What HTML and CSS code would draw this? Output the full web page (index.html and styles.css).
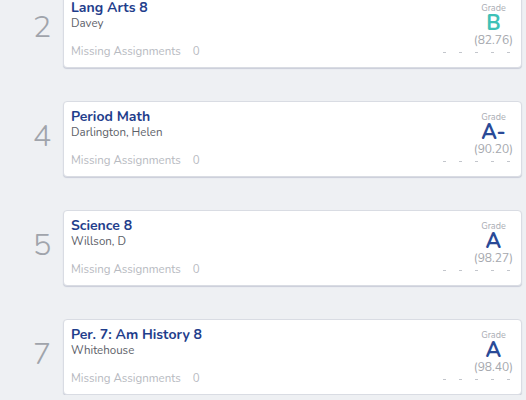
FILE: index.html
```html
<!DOCTYPE html>
<html>
<head>
<meta charset="utf-8">
<link rel="stylesheet" href="styles.css">
</head>
<body>
<div class="list">
  <div class="row">
    <div class="period">2</div>
    <div class="card">
      <div class="info">
        <div class="title">Lang Arts 8</div>
        <div class="teacher">Davey</div>
        <div class="missing">Missing Assignments <span class="count">0</span></div>
      </div>
      <div class="grade">
        <div class="grade-box">
          <div class="label">Grade</div>
          <div class="letter teal">B</div>
          <div class="score">(82.76)</div>
        </div>
        <div class="dashes"><span></span><span></span><span></span><span></span><span></span></div>
      </div>
    </div>
  </div>
  <div class="row">
    <div class="period">4</div>
    <div class="card">
      <div class="info">
        <div class="title">Period Math</div>
        <div class="teacher">Darlington, Helen</div>
        <div class="missing">Missing Assignments <span class="count">0</span></div>
      </div>
      <div class="grade">
        <div class="grade-box">
          <div class="label">Grade</div>
          <div class="letter">A-</div>
          <div class="score">(90.20)</div>
        </div>
        <div class="dashes"><span></span><span></span><span></span><span></span><span></span></div>
      </div>
    </div>
  </div>
  <div class="row">
    <div class="period">5</div>
    <div class="card">
      <div class="info">
        <div class="title">Science 8</div>
        <div class="teacher">Willson, D</div>
        <div class="missing">Missing Assignments <span class="count">0</span></div>
      </div>
      <div class="grade">
        <div class="grade-box">
          <div class="label">Grade</div>
          <div class="letter">A</div>
          <div class="score">(98.27)</div>
        </div>
        <div class="dashes"><span></span><span></span><span></span><span></span><span></span></div>
      </div>
    </div>
  </div>
  <div class="row">
    <div class="period">7</div>
    <div class="card">
      <div class="info">
        <div class="title">Per. 7: Am History 8</div>
        <div class="teacher">Whitehouse</div>
        <div class="missing">Missing Assignments <span class="count">0</span></div>
      </div>
      <div class="grade">
        <div class="grade-box">
          <div class="label">Grade</div>
          <div class="letter">A</div>
          <div class="score">(98.40)</div>
        </div>
        <div class="dashes"><span></span><span></span><span></span><span></span><span></span></div>
      </div>
    </div>
  </div>
</div>
</body>
</html>
```

FILE: styles.css
```css
* { box-sizing: border-box; }
html, body {
  margin: 0;
  padding: 0;
  background: #eef0f3;
  font-family: "Nunito", Lato, "Liberation Sans", sans-serif;
  overflow: hidden;
}
.list {
  display: flex;
  flex-direction: column;
  gap: 33px;
  margin-top: -8px;
  padding-right: 4px;
}
.row {
  display: flex;
  align-items: center;
}
.period {
  width: 63px;
  padding-left: 21px;
  text-align: center;
  font-size: 31px;
  color: #a0a4ab;
  font-weight: 300;
  margin-top: -6px;
}
.card {
  flex: 1;
  height: 76px;
  background: #fff;
  border: 1px solid #d9dce3;
  border-radius: 4px;
  box-shadow: 0 1px 1px #c9cdd9;
  display: flex;
  justify-content: space-between;
  padding: 6px 8px 0 7px;
}
.info {
  display: flex;
  flex-direction: column;
}
.title {
  font-size: 14px;
  font-weight: 700;
  color: #1f3e8c;
  line-height: 17px;
}
.teacher {
  font-size: 11.5px;
  color: #5c6068;
  line-height: 14px;
}
.missing {
  margin-top: 14px;
  font-size: 11.5px;
  color: #b7bac1;
  line-height: 14px;
}
.count { margin-left: 9px; }
.grade {
  display: flex;
  flex-direction: column;
  align-items: flex-end;
  padding-top: 4px;
}
.grade-box {
  display: flex;
  flex-direction: column;
  align-items: center;
}
.label {
  font-size: 9px;
  color: #a9acb3;
  line-height: 10px;
}
.letter {
  font-size: 21px;
  font-weight: 700;
  color: #2a4a97;
  line-height: 20px;
}
.letter.teal { color: #3ec1b7; }
.score {
  font-size: 12px;
  color: #a5a8ae;
  line-height: 15px;
}
.dashes {
  display: flex;
  gap: 13px;
  margin-top: 4px;
  margin-right: 3px;
}
.dashes span {
  width: 3px;
  height: 1px;
  background: #c3c6cc;
}
```
